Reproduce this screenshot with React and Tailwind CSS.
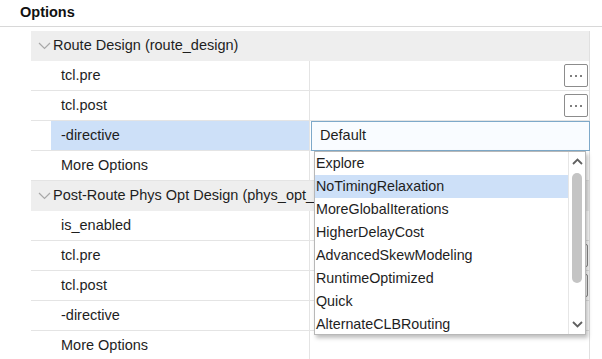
import React from 'react'

const font = { fontFamily: '"Liberation Sans", Arial, sans-serif' }

const Chevron = () => (
	<svg width="13" height="8" viewBox="0 0 13 8" className="mr-[2px] shrink-0">
		<path d="M1 1 L6.5 6.5 L12 1" fill="none" stroke="#a8a8a8" strokeWidth="1.2" />
	</svg>
)

const Ellipsis = () => (
	<div className="flex h-[23px] w-[24px] items-center justify-center gap-[3px] rounded-[2px] border border-[#8c8c8c] bg-white">
		<span className="h-[2px] w-[2px] rounded-full bg-[#555]" />
		<span className="h-[2px] w-[2px] rounded-full bg-[#555]" />
		<span className="h-[2px] w-[2px] rounded-full bg-[#555]" />
	</div>
)

function GroupRow({ label }) {
	return (
		<div className="flex h-[30px] items-center whitespace-nowrap bg-[#eeeeee] pl-[7px] text-[14.5px] text-[#1e1e1e]">
			<Chevron />
			<span className="max-w-[261px] overflow-hidden">{label}</span>
		</div>
	)
}

function Row({ label, selected, button }) {
	return (
		<div className="flex h-[30px] border-b border-[#e4e4e4] text-[14.5px] text-[#1e1e1e]">
			<div className="flex w-[279px] shrink-0 border-r border-[#e4e4e4]">
				<div className="w-[20px] shrink-0" />
				<div
					className={
						selected
							? 'flex flex-1 items-center bg-[#cde0f8] pl-[10px]'
							: 'flex flex-1 items-center pl-[10px]'
					}
				>
					{label}
				</div>
			</div>
			<div className="flex flex-1 items-center justify-end pr-[1px]">{button && <Ellipsis />}</div>
		</div>
	)
}

const items = [
	'Explore',
	'NoTimingRelaxation',
	'MoreGlobalIterations',
	'HigherDelayCost',
	'AdvancedSkewModeling',
	'RuntimeOptimized',
	'Quick',
	'AlternateCLBRouting',
]

export default function App() {
	return (
		<div className="relative h-[359px] w-[602px] overflow-hidden bg-white" style={font}>
			<div className="flex h-[27px] items-center border-b border-[#d8d8d8] pl-[20px]">
				<span className="text-[14.5px] font-bold text-[#111]">Options</span>
			</div>
			<div className="ml-[31px] mt-[4px] w-[559px] border-r border-[#e0e0e0]">
				<GroupRow label="Route Design (route_design)" />
				<Row label="tcl.pre" button />
				<Row label="tcl.post" button />
				<Row label="-directive" selected />
				<Row label="More Options" />
				<GroupRow label="Post-Route Phys Opt Design (phys_opt_design)" />
				<Row label="is_enabled" />
				<Row label="tcl.pre" button />
				<Row label="tcl.post" button />
				<Row label="-directive" />
				<Row label="More Options" />
			</div>

			{/* combo box */}
			<div className="absolute left-[311px] top-[121px] flex h-[30px] w-[279px] items-center border border-[#7ea9c9] bg-[#f9fcff] pl-[8px] text-[14.5px] text-[#1e1e1e]">
				Default
			</div>

			{/* dropdown list */}
			<div className="absolute left-[314px] top-[151px] flex h-[184px] w-[272px] border border-[#b8b8b8] bg-white shadow-[2px_3px_4px_rgba(0,0,0,0.25)]">
				<div className="flex-1">
					{items.map((it) => (
						<div
							key={it}
							className={
								it === 'NoTimingRelaxation'
									? 'flex h-[23px] items-center bg-[#cde0f8] pl-[1px] text-[14.3px] text-[#1e1e1e]'
									: 'flex h-[23px] items-center pl-[1px] text-[14.3px] text-[#1e1e1e]'
							}
						>
							{it}
						</div>
					))}
				</div>
				<div className="flex w-[17px] flex-col items-center border-l border-[#e6e6e6]">
					<svg width="11" height="7" viewBox="0 0 11 7" className="mt-[6px]">
						<path d="M1 6 L5.5 1.5 L10 6" fill="none" stroke="#606060" strokeWidth="1.8" />
					</svg>
					<div className="mt-[8px] h-[110px] w-[10px] rounded-full bg-[#c4c4c4]" />
					<div className="flex-1" />
					<svg width="11" height="7" viewBox="0 0 11 7" className="mb-[6px]">
						<path d="M1 1 L5.5 5.5 L10 1" fill="none" stroke="#606060" strokeWidth="1.8" />
					</svg>
				</div>
			</div>
		</div>
	)
}
